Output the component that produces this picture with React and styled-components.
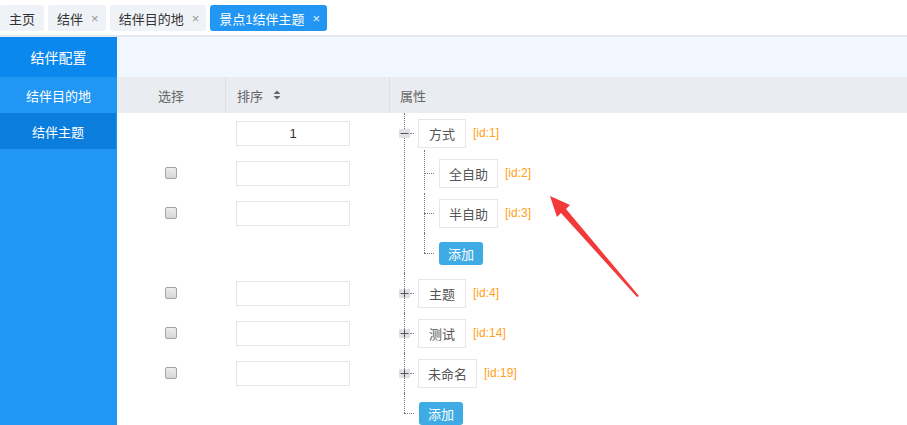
import styled, { createGlobalStyle } from "styled-components";

const GlobalStyle = createGlobalStyle`
  html, body {
    margin: 0;
    padding: 0;
    overflow: hidden;
    background: #fff;
    font-family: "Liberation Sans", "Noto Sans CJK SC", sans-serif;
    font-size: 13px;
    color: #555;
  }
  * { box-sizing: border-box; }
  ul { list-style: none; margin: 0; padding: 0; }
`;

const tabs = [
  { label: "主页", closable: false },
  { label: "结伴", closable: true },
  { label: "结伴目的地", closable: true },
  { label: "景点1结伴主题", closable: true, active: true },
];

const menu = [
  { label: "结伴目的地" },
  { label: "结伴主题", active: true },
];

// left columns, one entry per 40px row
const rows = [
  { check: false, input: true, value: "1" },
  { check: true, input: true },
  { check: true, input: true },
  { check: false, input: false },
  { check: true, input: true },
  { check: true, input: true },
  { check: true, input: true },
  { check: false, input: false },
];

const tree = [
  {
    id: 1,
    name: "方式",
    open: true,
    children: [
      { id: 2, name: "全自助" },
      { id: 3, name: "半自助" },
    ],
  },
  { id: 4, name: "主题" },
  { id: 14, name: "测试" },
  { id: 19, name: "未命名" },
];

const Page = styled.div`
  position: relative;
  height: 100vh;
  display: flex;
  flex-direction: column;
`;

const TabBar = styled.div`
  height: 37px;
  display: flex;
  align-items: flex-start;
  gap: 4px;
  padding: 5px 0 0 0;
  border-bottom: 2px solid #e3e8f1;
  flex-shrink: 0;
`;

const Tab = styled.div`
  height: 26px;
  display: flex;
  align-items: center;
  gap: 8px;
  padding: 0 ${(p) => (p.$closable ? "7px" : "9px")} 0 9px;
  border-radius: 3px;
  background: ${(p) => (p.$active ? "#2196f3" : "#eff2f6")};
  color: ${(p) => (p.$active ? "#fff" : "#333")};
  font-size: 13px;
  white-space: nowrap;
`;

const Close = styled.span`
  font-size: 13px;
  line-height: 1;
  color: ${(p) => (p.$active ? "#e6f2fe" : "#999")};
`;

const Body = styled.div`
  flex: 1;
  display: flex;
  min-height: 0;
`;

const Sidebar = styled.nav`
  width: 117px;
  flex-shrink: 0;
  background: #2196f3;
`;

const SideHead = styled.div`
  height: 40px;
  display: flex;
  align-items: center;
  justify-content: center;
  background: #0b88ee;
  color: #fff;
  font-size: 14px;
`;

const SideItem = styled.div`
  height: 36px;
  display: flex;
  align-items: center;
  justify-content: center;
  color: #fff;
  font-size: 13px;
  background: ${(p) => (p.$active ? "#0a7ddd" : "transparent")};
  margin-right: ${(p) => (p.$active ? "1px" : "0")};
`;

const Main = styled.main`
  flex: 1;
  display: flex;
  flex-direction: column;
  min-width: 0;
`;

const TopStrip = styled.div`
  height: 40px;
  background: #f0f7fe;
  flex-shrink: 0;
`;

const HeadRow = styled.div`
  height: 36px;
  display: grid;
  grid-template-columns: 108px 164px 1fr;
  background: #e9ecf0;
  color: #666;
  flex-shrink: 0;
`;

const HeadCell = styled.div`
  display: flex;
  align-items: center;
  justify-content: ${(p) => (p.$center ? "center" : "flex-start")};
  gap: 10px;
  padding-left: ${(p) => (p.$center ? "0" : p.$pad || "11px")};
  border-left: ${(p) => (p.$divider ? "1px solid #dcdfe4" : "none")};
`;

const SortIcon = () => (
  <svg width="8" height="10" viewBox="0 0 8 10">
    <path d="M4 0.5 L7.5 4 L0.5 4 Z" fill="#666" />
    <path d="M4 9.5 L7.5 6 L0.5 6 Z" fill="#666" />
  </svg>
);

const Grid = styled.div`
  display: grid;
  grid-template-columns: 108px 164px 1fr;
  grid-auto-rows: 40px;
`;

const Cell = styled.div`
  display: flex;
  align-items: center;
  justify-content: ${(p) => (p.$center ? "center" : "flex-start")};
  padding-left: ${(p) => (p.$center ? "0" : "11px")};
`;

const Check = styled.span`
  width: 12px;
  height: 12px;
  border: 1px solid #a3a3a3;
  border-radius: 2px;
  background: linear-gradient(#ededed, #d6d6d6);
`;

const SortInput = styled.div`
  width: 114px;
  height: 25px;
  border: 1px solid #e6e6e6;
  display: flex;
  align-items: center;
  justify-content: center;
  color: #333;
  font-size: 13px;
`;

const TreeCell = styled.div`
  grid-column: 3;
  grid-row: 1 / span 8;
  padding-left: 15px;
`;

const TreeList = styled.ul`
  margin-left: ${(p) => (p.$nested ? "20px" : "0")};
`;

const TreeItem = styled.li`
  position: relative;

  &::before {
    content: "";
    position: absolute;
    left: 0;
    top: ${(p) => (p.$first && p.$nested ? "-3px" : "0")};
    height: ${(p) => (p.$last ? (p.$first && p.$nested ? "23px" : "20px") : "100%")};
    border-left: 1px dotted #777;
  }
`;

const NodeLine = styled.div`
  position: relative;
  z-index: 1;
  height: 40px;
  display: flex;
  align-items: center;
  margin-left: ${(p) => (p.$expander ? "-5px" : "0")};
`;

const Expander = styled.span`
  width: 11px;
  height: 9px;
  background: #dfe1e4;
  display: flex;
  align-items: center;
  justify-content: center;
`;

const Dots = styled.span`
  width: ${(p) => p.$w}px;
  margin-right: ${(p) => p.$gap}px;
  border-top: 1px dotted #777;
`;

const NodeBox = styled.span`
  height: 29px;
  padding: 0 ${(p) => (p.$long ? "9px" : "10px")};
  display: flex;
  align-items: center;
  border: 1px solid #e6e6e6;
  color: #555;
  font-size: 13px;
`;

const NodeId = styled.span`
  margin-left: 7px;
  color: #ff9f1a;
  font-size: 12px;
`;

const AddButton = styled.button`
  height: 23px;
  width: 44px;
  padding: 0;
  border: none;
  border-radius: 3px;
  background: #3fabe4;
  color: #fff;
  font-family: inherit;
  font-size: 13px;
`;

const Overlay = styled.svg`
  position: absolute;
  left: 0;
  top: 0;
  pointer-events: none;
`;

const ExpandGlyph = ({ open }) => (
  <svg width="9" height="9" viewBox="0 0 9 9">
    <path d="M0.5 4.5 H8.5" stroke="#555" strokeWidth="1" />
    {!open && <path d="M4.5 0.5 V8.5" stroke="#555" strokeWidth="1" />}
  </svg>
);

const Node = ({ node, expandable }) => (
  <NodeLine $expander={expandable}>
    {expandable && (
      <Expander>
        <ExpandGlyph open={node.open} />
      </Expander>
    )}
    <Dots $w={expandable ? 4 : 10} $gap={expandable ? 4 : 5} />
    <NodeBox $long={node.name.length > 2}>{node.name}</NodeBox>
    <NodeId>[id:{node.id}]</NodeId>
  </NodeLine>
);

const AddLine = () => (
  <NodeLine>
    <Dots $w={10} $gap={5} />
    <AddButton type="button">添加</AddButton>
  </NodeLine>
);

const App = () => {
  return (
    <Page>
      <GlobalStyle />
      <TabBar>
        {tabs.map((t) => (
          <Tab key={t.label} $active={t.active} $closable={t.closable}>
            {t.label}
            {t.closable && <Close $active={t.active}>×</Close>}
          </Tab>
        ))}
      </TabBar>

      <Body>
        <Sidebar>
          <SideHead>结伴配置</SideHead>
          {menu.map((m) => (
            <SideItem key={m.label} $active={m.active}>
              {m.label}
            </SideItem>
          ))}
        </Sidebar>

        <Main>
          <TopStrip />
          <HeadRow>
            <HeadCell $center>选择</HeadCell>
            <HeadCell $divider>
              排序 <SortIcon />
            </HeadCell>
            <HeadCell $divider $pad="10px">属性</HeadCell>
          </HeadRow>

          <Grid>
            <TreeCell>
              <TreeList>
                {tree.map((node, i) => (
                  <TreeItem key={node.id} $first={i === 0}>
                    <Node node={node} expandable />
                    {node.open && (
                      <TreeList $nested>
                        {node.children.map((c, j) => (
                          <TreeItem key={c.id} $nested $first={j === 0}>
                            <Node node={c} />
                          </TreeItem>
                        ))}
                        <TreeItem $nested $last>
                          <AddLine />
                        </TreeItem>
                      </TreeList>
                    )}
                  </TreeItem>
                ))}
                <TreeItem $last>
                  <AddLine />
                </TreeItem>
              </TreeList>
            </TreeCell>

            {rows.map((r, i) => [
              <Cell key={`c${i}`} $center>
                {r.check && <Check />}
              </Cell>,
              <Cell key={`s${i}`}>
                {r.input && <SortInput>{r.value}</SortInput>}
              </Cell>,
            ])}
          </Grid>
        </Main>
      </Body>

      <Overlay width="907" height="425" viewBox="0 0 907 425">
        <polygon
          points="550,196 570,205 566,209 639,296 637,297 561,213 557,217"
          fill="#f23a3a"
        />
      </Overlay>
    </Page>
  );
};

export default App;
